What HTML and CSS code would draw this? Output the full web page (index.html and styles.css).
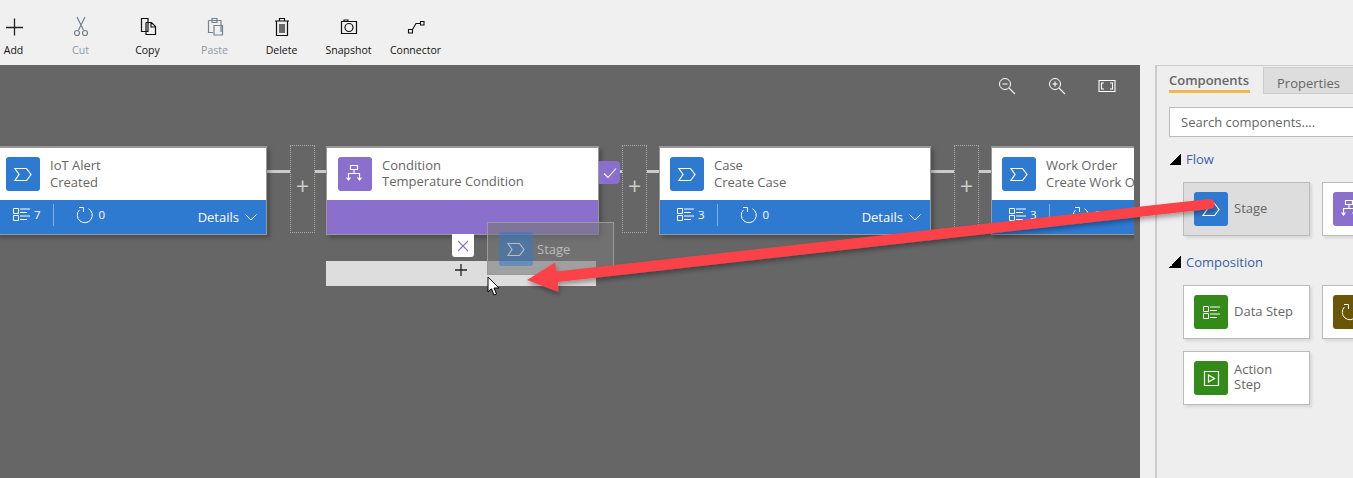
FILE: index.html
```html
<!doctype html>
<html>
<head>
    <title>Process designer</title>
    <link rel="stylesheet" href="styles.css">
</head>
<body>
    <svg class="defs" width="0" height="0">
        <symbol id="i-stage" viewBox="0 0 34 34">
            <path d="M9 11.500H20.500L25 17.500L20.500 23.500H9L13 17.500Z" fill="none" stroke="currentColor" stroke-width="1.200"/>
        </symbol>
        <symbol id="i-condition" viewBox="0 0 34 34">
            <path d="M12.500 8.500H19.500V12.500H12.500ZM16 12.500V16M10.500 22.500V16.500H21.500V22.500M8.500 20.500L10.500 23L12.500 20.500M19.500 20.500L21.500 23L23.500 20.500" fill="none" stroke="currentColor" stroke-width="1.200"/>
        </symbol>
        <symbol id="i-list" viewBox="0 0 17 13">
            <path d="M.5 .5H5.500V5.500H.5ZM.5 7.500H5.500V12.500H.5ZM7 1H17M7 4.500H14M7 8H17M7 11.500H14" fill="none" stroke="currentColor"/>
        </symbol>
        <symbol id="i-loop" viewBox="0 0 18 18">
            <path d="M3.400 4A7.500 7.500 0 1 0 12.500 2.700M3 1.500H7.500V6" fill="none" stroke="currentColor"/>
        </symbol>
        <symbol id="i-action" viewBox="0 0 34 34">
            <path d="M10.500 10.500H24.500V24.500H10.500ZM14.500 14V21L20.500 17.500Z" fill="none" stroke="currentColor" stroke-width="1.200"/>
        </symbol>
    </svg>

    <div class="toolbar">
        <div class="tool">
            <svg class="tool-icon" viewBox="0 0 24 24"><path d="M12.500 3.500V20.500M4 12.500H21" stroke="#222" stroke-width="1.300" fill="none"/></svg>
            <span>Add</span>
        </div>
        <div class="tool tool-off">
            <svg class="tool-icon" viewBox="0 0 24 24"><path d="M8 2L14.500 15M16 2L9.500 15" fill="none" stroke="#75818f" stroke-width="1.200"/><circle cx="8" cy="18" r="2.500" fill="none" stroke="#75818f" stroke-width="1.200"/><circle cx="16" cy="18" r="2.500" fill="none" stroke="#75818f" stroke-width="1.200"/></svg>
            <span>Cut</span>
        </div>
        <div class="tool">
            <svg class="tool-icon" viewBox="0 0 24 24"><path d="M5.500 3.500H12V16.500H5.500ZM10 7.500H15.500L19.500 11.500V19.500H10V7.500M15 7.500V12H19.500" fill="#f0f0f0" stroke="#111" stroke-width="1.200"/></svg>
            <span>Copy</span>
        </div>
        <div class="tool tool-off">
            <svg class="tool-icon" viewBox="0 0 24 24"><path d="M5.500 5.500H18V17M5.500 5.500V17.500H10M9 3.500H14V7.500H9ZM11 10.500H19.500V20H11Z" fill="none" stroke="#75818f" stroke-width="1.200"/></svg>
            <span>Paste</span>
        </div>
        <div class="tool">
            <svg class="tool-icon" viewBox="0 0 24 24"><path d="M5 6H19M9.500 6V3.500H14.500V6M6.500 6V20.500H17.500V6M10 9V18M12 9V18M14 9V18" fill="none" stroke="#111" stroke-width="1.200"/></svg>
            <span>Delete</span>
        </div>
        <div class="tool">
            <svg class="tool-icon" viewBox="0 0 24 24"><path d="M4.500 6.500H19.500V18.500H4.500ZM7 6.500V5H11V6.500" fill="none" stroke="#111" stroke-width="1.200"/><circle cx="12" cy="12.500" r="4" fill="none" stroke="#111" stroke-width="1.200"/></svg>
            <span>Snapshot</span>
        </div>
        <div class="tool">
            <svg class="tool-icon" viewBox="0 0 24 24"><path d="M4.500 14.500H8.500V18H4.500ZM16.500 6.500H20V10H16.500ZM8.500 14.500L12 8.500H16.500" fill="none" stroke="#111" stroke-width="1.100"/></svg>
            <span>Connector</span>
        </div>
    </div>

    <div class="main">
        <div class="canvas">
            <div class="zoom-tools">
                <svg class="zoom-icon" viewBox="0 0 18 18"><circle cx="7" cy="7" r="5.500" fill="none" stroke="#fff"/><path d="M4.500 7H9.500M11 11L17 17" stroke="#fff" stroke-width="1.100"/></svg>
                <svg class="zoom-icon" viewBox="0 0 18 18"><circle cx="7" cy="7" r="5.500" fill="none" stroke="#fff"/><path d="M4.500 7H9.500M7 4.500V9.500M11 11L17 17" stroke="#fff" stroke-width="1.100"/></svg>
                <svg class="zoom-icon" viewBox="0 0 18 18"><path d="M1 3.500H17V14.500H1ZM6 6H3.500V12H6M12 6H14.500V12H12" fill="none" stroke="#fff" stroke-width="1.100"/></svg>
            </div>

            <div class="diagram">
                <div class="link link-1"></div>
                <div class="link link-2"></div>
                <div class="link link-3"></div>
                <div class="link link-4"></div>
                <div class="link link-5"></div>
                <div class="link link-6"></div>

                <div class="gap gap-1">+</div>
                <div class="gap gap-2">+</div>
                <div class="gap gap-3">+</div>

                <div class="card card-iot">
                    <div class="card-top">
                        <div class="badge badge-blue"><svg><use href="#i-stage"/></svg></div>
                        <div class="card-text">
                            <div>IoT Alert</div>
                            <div>Created</div>
                        </div>
                    </div>
                    <div class="card-foot">
                        <svg class="foot-list"><use href="#i-list"/></svg><span class="foot-count">7</span>
                        <span class="foot-sep"></span>
                        <svg class="foot-loop"><use href="#i-loop"/></svg><span class="foot-count">0</span>
                        <span class="foot-details">Details <svg class="chev" viewBox="0 0 12 7"><path d="M.5 .5L6 6L11.500 .5" fill="none" stroke="#fff"/></svg></span>
                    </div>
                </div>

                <div class="card card-cond">
                    <div class="card-top">
                        <div class="badge badge-purple"><svg><use href="#i-condition"/></svg></div>
                        <div class="card-text">
                            <div>Condition</div>
                            <div>Temperature Condition</div>
                        </div>
                    </div>
                    <div class="card-foot card-foot-purple"></div>
                </div>
                <div class="check-tab">
                    <svg viewBox="0 0 14 12" width="14" height="12"><path d="M1 6.500L5 10.500L13 1.500" fill="none" stroke="#fff" stroke-width="1.100"/></svg>
                </div>

                <div class="card card-case">
                    <div class="card-top">
                        <div class="badge badge-blue"><svg><use href="#i-stage"/></svg></div>
                        <div class="card-text">
                            <div>Case</div>
                            <div>Create Case</div>
                        </div>
                    </div>
                    <div class="card-foot">
                        <svg class="foot-list"><use href="#i-list"/></svg><span class="foot-count">3</span>
                        <span class="foot-sep"></span>
                        <svg class="foot-loop"><use href="#i-loop"/></svg><span class="foot-count">0</span>
                        <span class="foot-details">Details <svg class="chev" viewBox="0 0 12 7"><path d="M.5 .5L6 6L11.500 .5" fill="none" stroke="#fff"/></svg></span>
                    </div>
                </div>

                <div class="card card-work">
                    <div class="card-top">
                        <div class="badge badge-blue"><svg><use href="#i-stage"/></svg></div>
                        <div class="card-text">
                            <div>Work Order</div>
                            <div>Create Work Order</div>
                        </div>
                    </div>
                    <div class="card-foot">
                        <svg class="foot-list"><use href="#i-list"/></svg><span class="foot-count">3</span>
                        <span class="foot-sep"></span>
                        <svg class="foot-loop"><use href="#i-loop"/></svg><span class="foot-count">0</span>
                    </div>
                </div>

                <div class="close-tab">
                    <svg viewBox="0 0 12 12" width="12" height="12"><path d="M1 1L11 11M11 1L1 11" stroke="#8a70cc" stroke-width="1.100"/></svg>
                </div>
                <div class="drop-bar">
                    <svg viewBox="0 0 12 12" width="12" height="12"><path d="M6 0V12M0 6H12" stroke="#222" stroke-width="1.300"/></svg>
                </div>
                <div class="ghost">
                    <div class="badge badge-ghost"><svg><use href="#i-stage"/></svg></div>
                    <span>Stage</span>
                </div>
            </div>
        </div>

        <div class="side">
            <div class="tabs">
                <div class="tab tab-on"><span>Components</span></div>
                <div class="tab">Properties</div>
            </div>
            <div class="search">Search components....</div>

            <div class="group"><i class="tri"></i>Flow</div>
            <div class="tiles">
                <div class="tile tile-on">
                    <div class="badge badge-blue"><svg><use href="#i-stage"/></svg></div>
                    <span>Stage</span>
                </div>
                <div class="tile">
                    <div class="badge badge-purple"><svg><use href="#i-condition"/></svg></div>
                </div>
            </div>

            <div class="group group-2"><i class="tri"></i>Composition</div>
            <div class="tiles">
                <div class="tile">
                    <div class="badge badge-green"><svg class="badge-list"><use href="#i-list"/></svg></div>
                    <span>Data Step</span>
                </div>
                <div class="tile">
                    <div class="badge badge-brown"><svg class="badge-loop"><use href="#i-loop"/></svg></div>
                </div>
                <div class="tile">
                    <div class="badge badge-green"><svg><use href="#i-action"/></svg></div>
                    <span>Action<br>Step</span>
                </div>
            </div>
        </div>
    </div>

    <svg class="arrow" width="1353" height="478" viewBox="0 0 1353 478">
        <defs>
            <filter id="arrow-shadow" x="-5%" y="-20%" width="110%" height="140%">
                <feDropShadow dx="1" dy="3" stdDeviation="2.500" flood-color="#000" flood-opacity=".35"/>
            </filter>
        </defs>
        <path d="M1209 199Q1214.500 199 1214.500 204Q1214.500 208.500 1210 209L558 282L558.500 292L527 280L555 262.500L556.500 271.500Z" fill="#fb4348" filter="url(#arrow-shadow)"/>
    </svg>

    <svg class="pointer" width="14" height="21" viewBox="0 0 14 21">
        <path d="M1 1V16L4.500 12.800L7 19L9.500 18L7 12H12Z" fill="#fff" stroke="#000"/>
    </svg>
</body>
</html>
```

FILE: styles.css
```css
* {
    box-sizing: border-box;
}
html, body {
    margin: 0;
    height: 478px;
    overflow: hidden;
}
body {
    position: relative;
    display: flex;
    flex-direction: column;
    font-family: 'Open Sans', 'Noto Sans', sans-serif;
    font-size: 13px;
    color: #666;
    background-color: #f0f0f0;
}
.defs {
    position: absolute;
}

/* toolbar */
.toolbar {
    display: flex;
    flex: 0 0 65px;
    margin-left: -20px;
    padding-top: 15px;
    background-color: #f0f0f0;
}
.tool {
    display: flex;
    flex-direction: column;
    align-items: center;
    width: 67px;
    font-size: 10.5px;
    color: #111;
}
.tool span {
    margin-top: 4px;
}
.tool-icon {
    width: 24px;
    height: 24px;
}
.tool-off {
    color: #8d98a8;
}

/* canvas */
.main {
    display: flex;
    flex: 1;
    min-height: 0;
}
.canvas {
    position: relative;
    flex: 0 0 1140px;
    background-color: #666;
}
.zoom-tools {
    position: absolute;
    top: 12px;
    right: 24px;
    display: flex;
    gap: 32px;
}
.zoom-icon {
    width: 18px;
    height: 18px;
}
.diagram {
    position: absolute;
    left: 0;
    top: 0;
    width: 1134px;
    height: 100%;
    overflow: hidden;
}

/* connector lines */
.link {
    position: absolute;
    top: 105px;
    height: 3px;
    background-color: #ccc;
}
.link-1 { left: 267px; width: 23px; }
.link-2 { left: 315px; width: 11px; }
.link-3 { left: 620px; width: 2px; }
.link-4 { left: 647px; width: 12px; }
.link-5 { left: 931px; width: 23px; }
.link-6 { left: 979px; width: 12px; }

.gap {
    position: absolute;
    top: 80px;
    width: 25px;
    height: 88px;
    border: 1px dotted #aaa;
    color: #ccc;
    font-size: 23px;
    line-height: 80px;
    text-align: center;
}
.gap-1 { left: 290px; }
.gap-2 { left: 622px; }
.gap-3 { left: 954px; }

/* stage cards */
.card {
    position: absolute;
    top: 81px;
    display: flex;
    flex-direction: column;
    width: 272px;
    height: 89px;
    border: 1px solid #999;
    border-top-width: 2px;
    box-shadow: 3px 3px 4px rgba(0,0,0,0.25);
    background-color: #fff;
}
.card-iot { left: -5px; }
.card-cond { left: 326px; width: 273px; }
.card-case { left: 659px; }
.card-work { left: 991px; }

.card-top {
    display: flex;
    flex: 1;
    padding: 9px 0 0 10px;
}
.card-cond .card-top {
    padding-left: 11px;
}
.card-text {
    margin-left: 10px;
    font-size: 13px;
    line-height: 17px;
    white-space: nowrap;
}
.card-cond .card-text {
    line-height: 16px;
}
.card-foot {
    display: flex;
    align-items: center;
    flex: 0 0 34px;
    padding: 0 0 5px 17px;
    background-color: #2f7ad1;
    color: #fff;
    font-size: 11.5px;
    font-weight: 500;
}
.card-foot-purple {
    background-color: #8a70cc;
}
.foot-list {
    width: 17px;
    height: 13px;
}
.foot-count {
    margin-left: 4px;
}
.foot-sep {
    width: 1px;
    height: 22px;
    margin: 0 22px 0 12px;
    background-color: #7fb0e6;
}
.foot-loop {
    width: 18px;
    height: 18px;
    margin-right: 1px;
}
.foot-details {
    display: flex;
    align-items: center;
    gap: 6px;
    margin-left: auto;
    margin-right: 9px;
    padding-top: 5px;
    font-size: 13px;
    font-weight: 400;
}
.chev {
    width: 12px;
    height: 7px;
}

.badge {
    display: flex;
    align-items: center;
    justify-content: center;
    flex: 0 0 34px;
    width: 34px;
    height: 34px;
    border-radius: 3px;
    color: #fff;
}
.badge svg {
    width: 34px;
    height: 34px;
}
.badge svg.badge-list {
    width: 17px;
    height: 15px;
}
.badge svg.badge-loop {
    width: 18px;
    height: 18px;
}
.badge-blue { background-color: #2f7ad1; }
.badge-purple { background-color: #8a70cc; }
.badge-green { background-color: #338a18; }
.badge-brown { background-color: #6b5508; }

.check-tab {
    position: absolute;
    left: 599px;
    top: 96px;
    display: flex;
    align-items: center;
    justify-content: center;
    width: 21px;
    height: 23px;
    border-radius: 0 4px 4px 0;
    background-color: #8a70cc;
}

/* drag and drop */
.close-tab {
    position: absolute;
    left: 452px;
    top: 169px;
    display: flex;
    align-items: center;
    justify-content: center;
    width: 22px;
    height: 23px;
    border-radius: 0 0 3px 3px;
    background-color: #fff;
}
.drop-bar {
    position: absolute;
    left: 326px;
    top: 196px;
    display: flex;
    align-items: center;
    justify-content: center;
    width: 270px;
    height: 25px;
    padding-bottom: 7px;
    background-color: #ddd;
}
.ghost {
    position: absolute;
    left: 487px;
    top: 157px;
    display: flex;
    align-items: center;
    gap: 4px;
    width: 127px;
    height: 53px;
    padding-left: 11px;
    border: 1px solid #999;
    background-color: rgba(120,120,120,0.6);
    color: #bbb;
}
.badge-ghost {
    background-color: rgba(47,122,209,0.5);
    color: #bbb;
}

/* side panel */
.side {
    flex: 1;
    margin-left: 15px;
    padding-left: 12px;
    border-left: 2px solid #ccc;
    border-top: 1px solid #ccc;
    background-color: #eee;
    overflow: hidden;
}
.tabs {
    display: flex;
    height: 28px;
    margin-left: -12px;
    margin-bottom: 13px;
}
.tab {
    flex: 1;
    margin-top: 1px;
    padding: 6px 0 0 13px;
    background-color: #ddd;
    border-top: 1px solid #ccc;
    border-bottom: 1px solid #ccc;
    border-left: 1px solid #ccc;
    white-space: nowrap;
    font-size: 13px;
}
.tab-on {
    flex: 0 0 106px;
    margin-top: 0;
    padding: 5px 0 0 12px;
    border: none;
    background-color: #eee;
    font-weight: 600;
}
.tab-on span {
    display: inline-block;
    width: 81px;
    height: 22px;
    border-bottom: 3px solid #f0b84f;
    white-space: nowrap;
}
.search {
    height: 30px;
    padding: 5px 11px;
    border: 1px solid #bbb;
    border-right: none;
    background-color: #fff;
    white-space: nowrap;
}
.group {
    display: flex;
    align-items: center;
    gap: 5px;
    margin-top: 13px;
    color: #3b5fa8;
    height: 18px;
}
.group-2 {
    margin-top: 17px;
}
.tri {
    width: 12px;
    height: 12px;
    background: linear-gradient(to bottom right, transparent 50%, #000 50%);
}
.tiles {
    display: grid;
    grid-template-columns: 127px 127px;
    gap: 12px;
    margin: 14px 0 0 14px;
}
.tile {
    display: flex;
    align-items: center;
    gap: 6px;
    height: 54px;
    padding-left: 10px;
    border: 1px solid #bbb;
    box-shadow: 2px 2px 3px rgba(0,0,0,0.1);
    background-color: #fff;
    line-height: 15px;
}
.tile span {
    margin-top: -2px;
}
.tile-on {
    background-color: #ddd;
}

/* overlays */
.arrow {
    position: absolute;
    left: 0;
    top: 0;
    pointer-events: none;
}
.pointer {
    position: absolute;
    left: 487px;
    top: 276px;
}
```
